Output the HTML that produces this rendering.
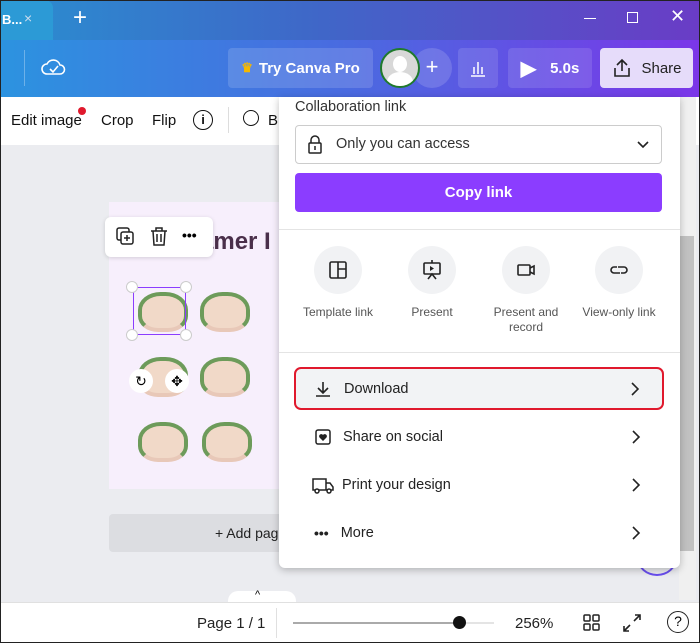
<!DOCTYPE html>
<html><head><style>
*{box-sizing:border-box;margin:0;padding:0}
body{width:700px;height:643px;overflow:hidden;font-family:"Liberation Sans",sans-serif;position:relative;background:#ebecf0}
.abs{position:absolute}
.title{left:0;top:0;width:700px;height:40px;background:linear-gradient(90deg,#2a8ed0,#3f67c8 45%,#6a3cc6)}
.tool{left:0;top:40px;width:700px;height:57px;background:linear-gradient(90deg,#2c93e0,#4a6ae0 50%,#7b36e8)}
.btn{position:absolute;border-radius:4px;color:#fff;font-weight:bold;font-size:15px;display:flex;align-items:center;justify-content:center}
.edit{left:0;top:97px;width:700px;height:48px;background:#fff;font-size:15px;color:#111}
.panel{left:279px;top:97px;width:401px;height:471px;background:#fff;box-shadow:0 2px 8px rgba(0,0,0,.25);border-radius:0 0 6px 6px}
.row{position:absolute;left:16px;width:368px;height:43px;display:flex;align-items:center;font-size:14.5px;color:#222}
.row span{margin-left:12px}
.row .ch{position:absolute;right:22px}
.circ{position:absolute;width:48px;height:48px;border-radius:50%;background:#f1f2f4;top:149px;display:flex;align-items:center;justify-content:center}
.lbl{position:absolute;top:208px;width:100px;text-align:center;font-size:12px;color:#555;line-height:15px}
.face{position:absolute;width:50px;height:40px;border-radius:45% 45% 40% 40%;background:#f1d9c8;border:4px solid #6d9b5a;border-bottom-color:#e8c8b8}
</style></head><body>
<div class="abs title">
 <div class="abs" style="left:0;top:0;width:53px;height:40px;background:#2c9ad6;border-radius:0 8px 0 0"></div>
 <div class="abs" style="left:2px;top:12px;color:#fff;font-size:13px;font-weight:bold">B...</div>
 <div class="abs" style="left:24px;top:10px;color:#cde;font-size:14px">×</div>
 <div class="abs" style="left:73px;top:4px;color:#fff;font-size:24px">+</div>
 <div class="abs" style="left:584px;top:18px;width:12px;height:1px;background:#fff"></div>
 <div class="abs" style="left:627px;top:12px;width:11px;height:11px;border:1px solid #fff"></div>
 <div class="abs" style="left:670px;top:6px;color:#fff;font-size:18px">✕</div>
</div>
<div class="abs tool">
 <div class="abs" style="left:24px;top:10px;width:1px;height:36px;background:rgba(255,255,255,.3)"></div>
 <svg class="abs" style="left:40px;top:16px" width="26" height="22" viewBox="0 0 26 22"><path d="M7 18a5 5 0 0 1 0-10 7 7 0 0 1 13 1 4.5 4.5 0 0 1 0 9z" fill="none" stroke="#fff" stroke-width="1.6"/><path d="M10 13l3 3 5-6" fill="none" stroke="#fff" stroke-width="1.6"/></svg>
 <div class="btn" style="left:228px;top:8px;width:145px;height:40px;background:rgba(255,255,255,.14)"><span style="color:#f5b800;margin-right:6px;font-size:13px">♛</span>Try Canva Pro</div>
 <div class="abs" style="left:412px;top:8px;width:40px;height:40px;border-radius:50%;background:rgba(255,255,255,.15);color:#fff;font-size:22px;text-align:center;line-height:38px">+</div>
 <div class="abs" style="left:380px;top:8px;width:40px;height:40px;border-radius:50%;background:#d8d8d8;border:2px solid #1f7a2c;overflow:hidden"><div class="abs" style="left:11px;top:6px;width:14px;height:16px;border-radius:50%;background:#fff"></div><div class="abs" style="left:5px;top:22px;width:26px;height:20px;border-radius:50% 50% 0 0;background:#fff"></div></div>
 <div class="btn" style="left:458px;top:8px;width:40px;height:40px;background:rgba(255,255,255,.12)"><svg width="20" height="20"><path d="M3 18h14M6 16V9M10 16V4M14 16V9" stroke="#fff" stroke-width="1.5"/></svg></div>
 <div class="btn" style="left:508px;top:8px;width:84px;height:40px;background:rgba(255,255,255,.12)"><span style="font-size:20px;margin-right:14px">▶</span>5.0s</div>
 <div class="btn" style="left:600px;top:8px;width:93px;height:40px;background:#e6dcfa;color:#222;font-weight:normal"><svg width="22" height="22" style="margin-right:8px"><path d="M11 14V3M6 8l5-5 5 5M4 11v8h14v-8" fill="none" stroke="#222" stroke-width="1.6"/></svg>Share</div>
</div>
<div class="abs edit">
 <div class="abs" style="left:11px;top:15px">Edit image</div>
 <div class="abs" style="left:78px;top:10px;width:8px;height:8px;border-radius:50%;background:#e0192d"></div>
 <div class="abs" style="left:101px;top:15px">Crop</div>
 <div class="abs" style="left:152px;top:15px">Flip</div>
 <div class="abs" style="left:193px;top:13px;width:20px;height:20px;border:1.6px solid #111;border-radius:50%;text-align:center;font-size:13px;font-weight:bold;line-height:17px">i</div>
 <div class="abs" style="left:228px;top:10px;width:1px;height:26px;background:#ddd"></div>
 <div class="abs" style="left:243px;top:13px;width:16px;height:16px;border:1.5px solid #111;border-radius:50%"></div>
 <div class="abs" style="left:268px;top:15px">B</div>
</div>
<div class="abs" style="left:109px;top:202px;width:172px;height:287px;background:#f7effc"></div>
<div class="abs" style="left:200px;top:228px;font-size:24px;font-weight:bold;color:#4a2f4a">amer I</div>
<div class="abs" style="left:105px;top:217px;width:108px;height:40px;background:#fff;border-radius:6px;box-shadow:0 1px 4px rgba(0,0,0,.15)">
 <svg class="abs" style="left:10px;top:9px" width="22" height="22"><rect x="2" y="2" width="12" height="12" rx="2" fill="none" stroke="#222" stroke-width="1.5"/><rect x="6" y="6" width="12" height="12" rx="2" fill="#fff" stroke="#222" stroke-width="1.5"/><path d="M12 9v6M9 12h6" stroke="#222" stroke-width="1.5"/></svg>
 <svg class="abs" style="left:44px;top:9px" width="20" height="22"><path d="M2 5h16M7 5V2h6v3M4 5l1 14h10l1-14M8 8v8M12 8v8" fill="none" stroke="#222" stroke-width="1.5"/></svg>
 <div class="abs" style="left:77px;top:10px;font-size:14px;font-weight:bold;letter-spacing:0px">•••</div>
</div>
<div class="face" style="left:138px;top:292px"></div>
<div class="face" style="left:200px;top:292px"></div>
<div class="face" style="left:138px;top:357px"></div>
<div class="face" style="left:200px;top:357px"></div>
<div class="face" style="left:138px;top:422px"></div>
<div class="face" style="left:202px;top:422px"></div>
<div class="abs" style="left:133px;top:287px;width:53px;height:48px;border:1.5px solid #8b3dff"></div>
<div class="abs" style="left:126px;top:281px;width:12px;height:12px;border-radius:50%;background:#fff;border:1px solid #ccc"></div>
<div class="abs" style="left:180px;top:281px;width:12px;height:12px;border-radius:50%;background:#fff;border:1px solid #ccc"></div>
<div class="abs" style="left:126px;top:329px;width:12px;height:12px;border-radius:50%;background:#fff;border:1px solid #ccc"></div>
<div class="abs" style="left:180px;top:329px;width:12px;height:12px;border-radius:50%;background:#fff;border:1px solid #ccc"></div>
<div class="abs" style="left:129px;top:369px;width:24px;height:24px;border-radius:50%;background:#fff;text-align:center;line-height:24px;font-size:14px">↻</div>
<div class="abs" style="left:165px;top:369px;width:24px;height:24px;border-radius:50%;background:#fff;text-align:center;line-height:24px;font-size:14px">✥</div>
<div class="abs" style="left:109px;top:514px;width:172px;height:38px;background:#dcdde1;border-radius:4px 0 0 4px"></div>
<div class="abs" style="left:215px;top:525px;font-size:14px;color:#222">+ Add pag</div>
<div class="abs" style="left:637px;top:540px;width:40px;height:36px;border-radius:50%;border:2px solid #6a4ff0"></div>
<div class="abs" style="left:679px;top:97px;width:17px;height:503px;background:#f0f0f0"></div>
<div class="abs" style="left:680px;top:236px;width:14px;height:315px;background:#c1c1c1"></div>
<div class="abs panel">
 <div class="abs" style="left:16px;top:2px;font-size:14.5px;color:#333">Collaboration link</div>
 <div class="abs" style="left:16px;top:28px;width:367px;height:39px;border:1px solid #ccc;border-radius:4px;font-size:14.5px;color:#333;padding:10px 0 0 40px">Only you can access
  <svg class="abs" style="left:11px;top:9px" width="16" height="20"><rect x="2" y="8" width="12" height="10" rx="1" fill="none" stroke="#222" stroke-width="1.5"/><path d="M4 8V5a4 4 0 0 1 8 0v3M8 11v4" fill="none" stroke="#222" stroke-width="1.5"/></svg>
  <svg class="abs" style="left:340px;top:14px" width="14" height="10"><path d="M2 2l5 5 5-5" fill="none" stroke="#222" stroke-width="1.6"/></svg></div>
 <div class="abs" style="left:16px;top:76px;width:367px;height:39px;background:#8b3dff;border-radius:4px;color:#fff;font-weight:bold;font-size:15px;text-align:center;line-height:39px">Copy link</div>
 <div class="abs" style="left:0;top:132px;width:401px;height:1px;background:#e4e4e4"></div>
 <div class="circ" style="left:35px"><svg width="20" height="20"><rect x="2" y="2" width="16" height="16" rx="1.5" fill="none" stroke="#222" stroke-width="1.6"/><path d="M10 2v16M10 9h8" stroke="#222" stroke-width="1.6"/></svg></div>
 <div class="circ" style="left:129px"><svg width="22" height="22"><rect x="3" y="4" width="16" height="11" rx="1" fill="none" stroke="#222" stroke-width="1.6"/><path d="M11 1v3M7 20l4-5 4 5" fill="none" stroke="#222" stroke-width="1.6"/><path d="M9 7l4 2.5-4 2.5z" fill="#222"/></svg></div>
 <div class="circ" style="left:223px"><svg width="22" height="22"><rect x="3" y="6" width="12" height="10" rx="1" fill="none" stroke="#222" stroke-width="1.6"/><path d="M15 9l4-2v8l-4-2" fill="none" stroke="#222" stroke-width="1.6"/></svg></div>
 <div class="circ" style="left:316px"><svg width="22" height="22"><path d="M9 8h-3a3 3 0 0 0 0 6h6M13 14h3a3 3 0 0 0 0-6h-6" fill="none" stroke="#222" stroke-width="1.6"/></svg></div>
 <div class="lbl" style="left:9px">Template link</div>
 <div class="lbl" style="left:103px">Present</div>
 <div class="lbl" style="left:197px">Present and record</div>
 <div class="lbl" style="left:290px">View-only link</div>
 <div class="abs" style="left:0;top:255px;width:401px;height:1px;background:#e4e4e4"></div>
 <div class="row" style="top:270px;left:15px;width:370px;background:#f2f3f5;border:2px solid #e0192d;border-radius:7px;padding-left:18px"><svg width="18" height="18"><path d="M9 2v10M4 8l5 5 5-5M2 16h14" fill="none" stroke="#222" stroke-width="1.6"/></svg><span>Download</span><svg class="ch" width="10" height="16"><path d="M2 2l6 6-6 6" fill="none" stroke="#222" stroke-width="1.6"/></svg></div>
 <div class="row" style="top:318px;padding-left:20px"><svg width="16" height="16"><rect x="1" y="1" width="14" height="14" rx="2" fill="none" stroke="#222" stroke-width="1.5"/><path d="M8 12L4.5 8.5a2 2 0 0 1 3.5-2.5 2 2 0 0 1 3.5 2.5z" fill="#222"/></svg><span>Share on social</span><svg class="ch" width="10" height="16"><path d="M2 2l6 6-6 6" fill="none" stroke="#222" stroke-width="1.6"/></svg></div>
 <div class="row" style="top:366px;padding-left:17px"><svg width="22" height="18"><path d="M1 3h13v11H1zM14 7h4l3 4v3h-7" fill="none" stroke="#222" stroke-width="1.5"/><circle cx="5" cy="15" r="2" fill="#fff" stroke="#222" stroke-width="1.5"/><circle cx="17" cy="15" r="2" fill="#fff" stroke="#222" stroke-width="1.5"/></svg><span style="margin-left:8px">Print your design</span><svg class="ch" width="10" height="16"><path d="M2 2l6 6-6 6" fill="none" stroke="#222" stroke-width="1.6"/></svg></div>
 <div class="row" style="top:414px;padding-left:19px"><span style="margin:0;font-size:14px;font-weight:bold">•••</span><span style="margin-left:12px">More</span><svg class="ch" width="10" height="16"><path d="M2 2l6 6-6 6" fill="none" stroke="#222" stroke-width="1.6"/></svg></div>
</div>
<div class="abs" style="left:228px;top:591px;width:68px;height:12px;background:#fff;border-radius:10px 10px 0 0"></div>
<div class="abs" style="left:255px;top:589px;font-size:11px">^</div>
<div class="abs" style="left:0;top:602px;width:700px;height:41px;background:#fff;border-top:1px solid #e0e0e0">
 <div class="abs" style="left:197px;top:12px;font-size:15px;color:#222">Page 1 / 1</div>
 <div class="abs" style="left:276px;top:5px;width:1px;height:30px;background:#e0e0e0"></div>
 <div class="abs" style="left:293px;top:19px;width:166px;height:2px;background:#aaa"></div>
 <div class="abs" style="left:459px;top:19px;width:35px;height:2px;background:#e4e4e4"></div>
 <div class="abs" style="left:453px;top:13px;width:13px;height:13px;border-radius:50%;background:#111"></div>
 <div class="abs" style="left:515px;top:12px;font-size:15px;color:#222">256%</div>
 <svg class="abs" style="left:583px;top:11px" width="18" height="18"><g fill="none" stroke="#222" stroke-width="1.5"><rect x="1" y="1" width="6" height="6" rx="1"/><rect x="10" y="1" width="6" height="6" rx="1"/><rect x="1" y="10" width="6" height="6" rx="1"/><rect x="10" y="10" width="6" height="6" rx="1"/></g></svg>
 <svg class="abs" style="left:622px;top:10px" width="20" height="20"><path d="M12 8l6-6M13 2h5v5M8 12l-6 6M2 13v5h5" fill="none" stroke="#222" stroke-width="1.6"/></svg>
 <div class="abs" style="left:667px;top:8px;width:22px;height:22px;border:1.6px solid #222;border-radius:50%;text-align:center;font-size:14px;line-height:19px">?</div>
</div>
<div class="abs" style="left:0;top:0;width:700px;height:643px;border:1px solid #222;pointer-events:none"></div>
</body></html>
